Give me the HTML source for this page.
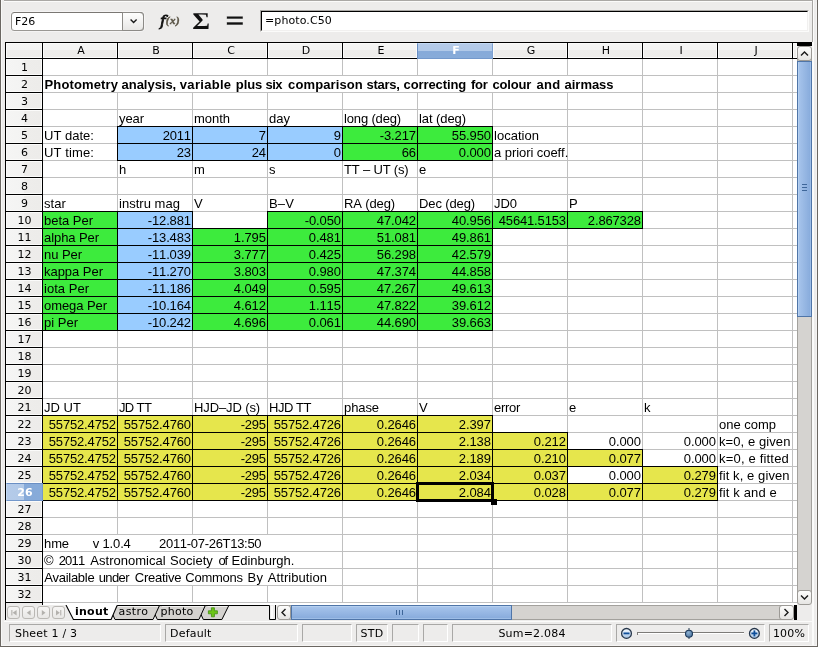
<!DOCTYPE html>
<html><head><meta charset="utf-8"><title>inout</title>
<style>
html,body{margin:0;padding:0}
body{width:818px;height:647px;position:relative;overflow:hidden;background:#edeceb;font-family:"DejaVu Sans","Liberation Sans",sans-serif;font-size:11px;color:#000}
div,span{position:absolute;box-sizing:border-box;white-space:nowrap}
.ui{font-family:"DejaVu Sans","Liberation Sans",sans-serif;font-size:11px;line-height:13px}
#sheet{left:43px;top:59px;width:754px;height:546px;background:#fff;overflow:hidden}
.vl{width:1px;background:#c0c0c0;top:0;height:544px}
.hl{height:1px;background:#c0c0c0;left:0;width:754px}
.wh{background:#fff;height:16px}
.c{width:76px;height:18px;border:1px solid #000}
.t{font-family:"Liberation Sans",sans-serif;font-size:13px;line-height:17px;height:17px;font-kerning:none}
.r{text-align:right}
.b{font-weight:bold}
.ch{top:43px;height:15px;width:74px;background:linear-gradient(#f5f5f4,#f3f3f2 50%,#eeedeb 50%,#edecea);border:1px solid #fbfbfa;text-align:center;line-height:13px;padding-left:2px}
.rh{left:6px;width:36px;height:16px;background:linear-gradient(90deg,#f5f5f4,#f3f3f2 50%,#eeedeb 50%,#edecea);border:1px solid #fbfbfa;text-align:center;line-height:14px;padding:1px 0 0 1px}
.sb{top:624px;height:18px;border:1px solid;border-color:#a9a8a6 #fff #fff #a9a8a6;line-height:16px;padding-top:1px;letter-spacing:0.2px}
</style></head><body><div id="w" style="left:0;top:0;width:818px;height:647px;will-change:transform">

<div style="left:0;top:0;width:1px;height:647px;background:#6b6762"></div>
<div style="left:1px;top:0;width:1px;height:646px;background:#f8f8f7"></div>
<div style="left:817px;top:0;width:1px;height:647px;background:#6b6762"></div>
<div style="left:812px;top:0;width:1px;height:42px;background:#a9a7a4"></div>
<div style="left:812px;top:42px;width:1px;height:604px;background:#fbfbfa"></div>
<div style="left:813px;top:0;width:1px;height:646px;background:#fbfbfa"></div>
<div style="left:1px;top:645px;width:816px;height:1px;background:#f6f5f4"></div>
<div style="left:816px;top:2px;width:1px;height:644px;background:#f4f3f2"></div>
<div style="left:0;top:646px;width:818px;height:1px;background:#6b6762"></div>
<div style="left:4px;top:0;width:808px;height:1px;background:#aaa8a5"></div>
<div style="left:4px;top:1px;width:808px;height:1px;background:#fbfbfa"></div>
<div style="left:11px;top:12px;width:133px;height:19px;border:1px solid;border-color:#7a7773 #8f8d89 #9a9894 #8f8d89;border-radius:3.5px;background:#fff;box-shadow:0 0 0 1px rgba(255,255,255,.45)"></div>
<div style="left:122px;top:12px;width:22px;height:19px;border:1px solid #8d8b87;border-radius:0 4px 4px 0;background:linear-gradient(#fefefe,#e8e7e5)"></div>
<svg style="position:absolute;left:129px;top:18px" width="9" height="7" viewBox="0 0 9 7"><path d="M1.6 1.6 L4.6 4.6 L7.6 1.6" fill="none" stroke="#1a1a1a" stroke-width="1.4"/></svg>
<div class="ui" style="left:15px;top:15px">F26</div>
<svg style="position:absolute;left:150px;top:5px" width="100" height="32" viewBox="0 0 100 32">
<text transform="translate(10,20.5) scale(1.05,1)" font-family="'DejaVu Serif','Liberation Serif',serif" font-style="italic" font-size="14.6" fill="#111" stroke="#111" stroke-width="0.8">f</text>
<text x="15.8" y="19" letter-spacing="0.5" font-family="'Liberation Serif','DejaVu Serif',serif" font-style="italic" font-weight="bold" font-size="11" fill="#5a5446" stroke="#5a5446" stroke-width="0.4">(x)</text>
<text transform="translate(42.2,23.9) scale(1.18,1.048) rotate(0.3)" font-family="'Liberation Serif','DejaVu Serif',serif" font-weight="bold" font-size="23" fill="#111">Σ</text>
<text transform="translate(74,24.2) scale(1,0.955)" font-family="'DejaVu Sans',sans-serif" font-weight="bold" font-size="26" fill="#111" stroke="#edeceb" stroke-width="0.4">=</text>
</svg>
<div style="left:260px;top:10px;width:549px;height:22px;border:1px solid;border-color:#a9a7a4 #fbfbfa #fbfbfa #a9a7a4"></div>
<div style="left:261px;top:11px;width:547px;height:20px;background:#fff;border:1px solid;border-color:#000 #f1f0ef #f1f0ef #000"></div>
<div class="ui" style="left:265px;top:14px;letter-spacing:0.1px">=photo.C50</div>
<div style="left:5px;top:42px;width:807px;height:1px;background:#000"></div>
<div style="left:797px;top:42px;width:15px;height:4px;background:#000"></div>
<div style="left:5px;top:42px;width:1px;height:578px;background:#000"></div>
<div style="left:42px;top:42px;width:1px;height:563px;background:#000"></div>
<div style="left:5px;top:58px;width:792px;height:1px;background:#000"></div>
<div style="left:6px;top:43px;width:36px;height:15px;background:linear-gradient(#f5f5f4,#f3f3f2 50%,#eeedeb 50%,#edecea);border:1px solid #fbfbfa"></div>
<div class="ch ui" style="left:43px">A</div>
<div style="left:117px;top:43px;width:1px;height:15px;background:#000"></div>
<div class="ch ui" style="left:118px">B</div>
<div style="left:192px;top:43px;width:1px;height:15px;background:#000"></div>
<div class="ch ui" style="left:193px">C</div>
<div style="left:267px;top:43px;width:1px;height:15px;background:#000"></div>
<div class="ch ui" style="left:268px">D</div>
<div style="left:342px;top:43px;width:1px;height:15px;background:#000"></div>
<div class="ch ui" style="left:343px">E</div>
<div style="left:417px;top:43px;width:1px;height:15px;background:#000"></div>
<div class="ch ui" style="left:417px;width:76px;height:16px;background:linear-gradient(#b5cbe9,#b1c9e8 50%,#86aad9 50%,#87abd9);border:1px solid;border-color:#c3daf5 #7da0d0 #7398cb #6a8fc4;color:#fff;font-weight:bold">F</div>
<div class="ch ui" style="left:493px">G</div>
<div style="left:567px;top:43px;width:1px;height:15px;background:#000"></div>
<div class="ch ui" style="left:568px">H</div>
<div style="left:642px;top:43px;width:1px;height:15px;background:#000"></div>
<div class="ch ui" style="left:643px">I</div>
<div style="left:717px;top:43px;width:1px;height:15px;background:#000"></div>
<div class="ch ui" style="left:718px">J</div>
<div style="left:792px;top:43px;width:1px;height:15px;background:#000"></div>
<div class="ch" style="left:793px;width:4px"></div>
<div class="rh ui" style="top:59px">1</div>
<div style="left:6px;top:75px;width:36px;height:1px;background:#000"></div>
<div class="rh ui" style="top:76px">2</div>
<div style="left:6px;top:92px;width:36px;height:1px;background:#000"></div>
<div class="rh ui" style="top:93px">3</div>
<div style="left:6px;top:109px;width:36px;height:1px;background:#000"></div>
<div class="rh ui" style="top:110px">4</div>
<div style="left:6px;top:126px;width:36px;height:1px;background:#000"></div>
<div class="rh ui" style="top:127px">5</div>
<div style="left:6px;top:143px;width:36px;height:1px;background:#000"></div>
<div class="rh ui" style="top:144px">6</div>
<div style="left:6px;top:160px;width:36px;height:1px;background:#000"></div>
<div class="rh ui" style="top:161px">7</div>
<div style="left:6px;top:177px;width:36px;height:1px;background:#000"></div>
<div class="rh ui" style="top:178px">8</div>
<div style="left:6px;top:194px;width:36px;height:1px;background:#000"></div>
<div class="rh ui" style="top:195px">9</div>
<div style="left:6px;top:211px;width:36px;height:1px;background:#000"></div>
<div class="rh ui" style="top:212px">10</div>
<div style="left:6px;top:228px;width:36px;height:1px;background:#000"></div>
<div class="rh ui" style="top:229px">11</div>
<div style="left:6px;top:245px;width:36px;height:1px;background:#000"></div>
<div class="rh ui" style="top:246px">12</div>
<div style="left:6px;top:262px;width:36px;height:1px;background:#000"></div>
<div class="rh ui" style="top:263px">13</div>
<div style="left:6px;top:279px;width:36px;height:1px;background:#000"></div>
<div class="rh ui" style="top:280px">14</div>
<div style="left:6px;top:296px;width:36px;height:1px;background:#000"></div>
<div class="rh ui" style="top:297px">15</div>
<div style="left:6px;top:313px;width:36px;height:1px;background:#000"></div>
<div class="rh ui" style="top:314px">16</div>
<div style="left:6px;top:330px;width:36px;height:1px;background:#000"></div>
<div class="rh ui" style="top:331px">17</div>
<div style="left:6px;top:347px;width:36px;height:1px;background:#000"></div>
<div class="rh ui" style="top:348px">18</div>
<div style="left:6px;top:364px;width:36px;height:1px;background:#000"></div>
<div class="rh ui" style="top:365px">19</div>
<div style="left:6px;top:381px;width:36px;height:1px;background:#000"></div>
<div class="rh ui" style="top:382px">20</div>
<div style="left:6px;top:398px;width:36px;height:1px;background:#000"></div>
<div class="rh ui" style="top:399px">21</div>
<div style="left:6px;top:415px;width:36px;height:1px;background:#000"></div>
<div class="rh ui" style="top:416px">22</div>
<div style="left:6px;top:432px;width:36px;height:1px;background:#000"></div>
<div class="rh ui" style="top:433px">23</div>
<div style="left:6px;top:449px;width:36px;height:1px;background:#000"></div>
<div class="rh ui" style="top:450px">24</div>
<div style="left:6px;top:466px;width:36px;height:1px;background:#000"></div>
<div class="rh ui" style="top:467px">25</div>
<div style="left:6px;top:483px;width:36px;height:1px;background:#000"></div>
<div class="rh ui" style="left:6px;width:37px;top:483px;height:18px;padding-top:2px;line-height:14px;background:linear-gradient(90deg,#b5cbe9,#b1c9e8 50%,#86aad9 50%,#87abd9);border:1px solid;border-color:#6a8fc4 #7398cb #7398cb #c3daf5;color:#fff;font-weight:bold">26</div>
<div class="rh ui" style="top:501px">27</div>
<div style="left:6px;top:517px;width:36px;height:1px;background:#000"></div>
<div class="rh ui" style="top:518px">28</div>
<div style="left:6px;top:534px;width:36px;height:1px;background:#000"></div>
<div class="rh ui" style="top:535px">29</div>
<div style="left:6px;top:551px;width:36px;height:1px;background:#000"></div>
<div class="rh ui" style="top:552px">30</div>
<div style="left:6px;top:568px;width:36px;height:1px;background:#000"></div>
<div class="rh ui" style="top:569px">31</div>
<div style="left:6px;top:585px;width:36px;height:1px;background:#000"></div>
<div class="rh ui" style="top:586px">32</div>
<div style="left:6px;top:602px;width:36px;height:1px;background:#000"></div>
<div id="sheet">
<div class="vl" style="left:74px"></div>
<div class="vl" style="left:149px"></div>
<div class="vl" style="left:224px"></div>
<div class="vl" style="left:299px"></div>
<div class="vl" style="left:374px"></div>
<div class="vl" style="left:449px"></div>
<div class="vl" style="left:524px"></div>
<div class="vl" style="left:599px"></div>
<div class="vl" style="left:674px"></div>
<div class="vl" style="left:749px"></div>
<div class="hl" style="top:16px"></div>
<div class="hl" style="top:33px"></div>
<div class="hl" style="top:50px"></div>
<div class="hl" style="top:67px"></div>
<div class="hl" style="top:84px"></div>
<div class="hl" style="top:101px"></div>
<div class="hl" style="top:118px"></div>
<div class="hl" style="top:135px"></div>
<div class="hl" style="top:152px"></div>
<div class="hl" style="top:169px"></div>
<div class="hl" style="top:186px"></div>
<div class="hl" style="top:203px"></div>
<div class="hl" style="top:220px"></div>
<div class="hl" style="top:237px"></div>
<div class="hl" style="top:254px"></div>
<div class="hl" style="top:271px"></div>
<div class="hl" style="top:288px"></div>
<div class="hl" style="top:305px"></div>
<div class="hl" style="top:322px"></div>
<div class="hl" style="top:339px"></div>
<div class="hl" style="top:356px"></div>
<div class="hl" style="top:373px"></div>
<div class="hl" style="top:390px"></div>
<div class="hl" style="top:407px"></div>
<div class="hl" style="top:424px"></div>
<div class="hl" style="top:441px"></div>
<div class="hl" style="top:458px"></div>
<div class="hl" style="top:475px"></div>
<div class="hl" style="top:492px"></div>
<div class="hl" style="top:509px"></div>
<div class="hl" style="top:526px"></div>
<div class="hl" style="top:543px"></div>
<div class="wh" style="left:74px;top:17px;width:1px"></div>
<div class="wh" style="left:149px;top:17px;width:1px"></div>
<div class="wh" style="left:224px;top:17px;width:1px"></div>
<div class="wh" style="left:299px;top:17px;width:1px"></div>
<div class="wh" style="left:374px;top:17px;width:1px"></div>
<div class="wh" style="left:449px;top:17px;width:1px"></div>
<div class="wh" style="left:524px;top:17px;width:1px"></div>
<div class="wh" style="left:74px;top:476px;width:1px"></div>
<div class="wh" style="left:149px;top:476px;width:1px"></div>
<div class="wh" style="left:224px;top:476px;width:1px"></div>
<div class="wh" style="left:74px;top:493px;width:1px"></div>
<div class="wh" style="left:149px;top:493px;width:1px"></div>
<div class="wh" style="left:224px;top:493px;width:1px"></div>
<div class="wh" style="left:74px;top:510px;width:1px"></div>
<div class="wh" style="left:149px;top:510px;width:1px"></div>
<div class="wh" style="left:224px;top:510px;width:1px"></div>
<div class="c" style="left:74px;top:67px;background:#99ccff"></div>
<div class="c" style="left:149px;top:67px;background:#99ccff"></div>
<div class="c" style="left:224px;top:67px;background:#99ccff"></div>
<div class="c" style="left:299px;top:67px;background:#3deb3d"></div>
<div class="c" style="left:374px;top:67px;background:#3deb3d"></div>
<div class="c" style="left:74px;top:84px;background:#99ccff"></div>
<div class="c" style="left:149px;top:84px;background:#99ccff"></div>
<div class="c" style="left:224px;top:84px;background:#99ccff"></div>
<div class="c" style="left:299px;top:84px;background:#3deb3d"></div>
<div class="c" style="left:374px;top:84px;background:#3deb3d"></div>
<div class="c" style="left:-1px;top:152px;background:#3deb3d"></div>
<div class="c" style="left:74px;top:152px;background:#99ccff"></div>
<div class="c" style="left:224px;top:152px;background:#3deb3d"></div>
<div class="c" style="left:299px;top:152px;background:#3deb3d"></div>
<div class="c" style="left:374px;top:152px;background:#3deb3d"></div>
<div class="c" style="left:449px;top:152px;background:#3deb3d"></div>
<div class="c" style="left:524px;top:152px;background:#3deb3d"></div>
<div class="c" style="left:-1px;top:169px;background:#3deb3d"></div>
<div class="c" style="left:74px;top:169px;background:#99ccff"></div>
<div class="c" style="left:149px;top:169px;background:#3deb3d"></div>
<div class="c" style="left:224px;top:169px;background:#3deb3d"></div>
<div class="c" style="left:299px;top:169px;background:#3deb3d"></div>
<div class="c" style="left:374px;top:169px;background:#3deb3d"></div>
<div class="c" style="left:-1px;top:186px;background:#3deb3d"></div>
<div class="c" style="left:74px;top:186px;background:#99ccff"></div>
<div class="c" style="left:149px;top:186px;background:#3deb3d"></div>
<div class="c" style="left:224px;top:186px;background:#3deb3d"></div>
<div class="c" style="left:299px;top:186px;background:#3deb3d"></div>
<div class="c" style="left:374px;top:186px;background:#3deb3d"></div>
<div class="c" style="left:-1px;top:203px;background:#3deb3d"></div>
<div class="c" style="left:74px;top:203px;background:#99ccff"></div>
<div class="c" style="left:149px;top:203px;background:#3deb3d"></div>
<div class="c" style="left:224px;top:203px;background:#3deb3d"></div>
<div class="c" style="left:299px;top:203px;background:#3deb3d"></div>
<div class="c" style="left:374px;top:203px;background:#3deb3d"></div>
<div class="c" style="left:-1px;top:220px;background:#3deb3d"></div>
<div class="c" style="left:74px;top:220px;background:#99ccff"></div>
<div class="c" style="left:149px;top:220px;background:#3deb3d"></div>
<div class="c" style="left:224px;top:220px;background:#3deb3d"></div>
<div class="c" style="left:299px;top:220px;background:#3deb3d"></div>
<div class="c" style="left:374px;top:220px;background:#3deb3d"></div>
<div class="c" style="left:-1px;top:237px;background:#3deb3d"></div>
<div class="c" style="left:74px;top:237px;background:#99ccff"></div>
<div class="c" style="left:149px;top:237px;background:#3deb3d"></div>
<div class="c" style="left:224px;top:237px;background:#3deb3d"></div>
<div class="c" style="left:299px;top:237px;background:#3deb3d"></div>
<div class="c" style="left:374px;top:237px;background:#3deb3d"></div>
<div class="c" style="left:-1px;top:254px;background:#3deb3d"></div>
<div class="c" style="left:74px;top:254px;background:#99ccff"></div>
<div class="c" style="left:149px;top:254px;background:#3deb3d"></div>
<div class="c" style="left:224px;top:254px;background:#3deb3d"></div>
<div class="c" style="left:299px;top:254px;background:#3deb3d"></div>
<div class="c" style="left:374px;top:254px;background:#3deb3d"></div>
<div class="c" style="left:-1px;top:356px;background:#e6e64c"></div>
<div class="c" style="left:74px;top:356px;background:#e6e64c"></div>
<div class="c" style="left:149px;top:356px;background:#e6e64c"></div>
<div class="c" style="left:224px;top:356px;background:#e6e64c"></div>
<div class="c" style="left:299px;top:356px;background:#e6e64c"></div>
<div class="c" style="left:374px;top:356px;background:#e6e64c"></div>
<div class="c" style="left:-1px;top:373px;background:#e6e64c"></div>
<div class="c" style="left:74px;top:373px;background:#e6e64c"></div>
<div class="c" style="left:149px;top:373px;background:#e6e64c"></div>
<div class="c" style="left:224px;top:373px;background:#e6e64c"></div>
<div class="c" style="left:299px;top:373px;background:#e6e64c"></div>
<div class="c" style="left:374px;top:373px;background:#e6e64c"></div>
<div class="c" style="left:449px;top:373px;background:#e6e64c"></div>
<div class="c" style="left:-1px;top:390px;background:#e6e64c"></div>
<div class="c" style="left:74px;top:390px;background:#e6e64c"></div>
<div class="c" style="left:149px;top:390px;background:#e6e64c"></div>
<div class="c" style="left:224px;top:390px;background:#e6e64c"></div>
<div class="c" style="left:299px;top:390px;background:#e6e64c"></div>
<div class="c" style="left:374px;top:390px;background:#e6e64c"></div>
<div class="c" style="left:449px;top:390px;background:#e6e64c"></div>
<div class="c" style="left:524px;top:390px;background:#e6e64c"></div>
<div class="c" style="left:-1px;top:407px;background:#e6e64c"></div>
<div class="c" style="left:74px;top:407px;background:#e6e64c"></div>
<div class="c" style="left:149px;top:407px;background:#e6e64c"></div>
<div class="c" style="left:224px;top:407px;background:#e6e64c"></div>
<div class="c" style="left:299px;top:407px;background:#e6e64c"></div>
<div class="c" style="left:374px;top:407px;background:#e6e64c"></div>
<div class="c" style="left:449px;top:407px;background:#e6e64c"></div>
<div class="c" style="left:599px;top:407px;background:#e6e64c"></div>
<div class="c" style="left:-1px;top:424px;background:#e6e64c"></div>
<div class="c" style="left:74px;top:424px;background:#e6e64c"></div>
<div class="c" style="left:149px;top:424px;background:#e6e64c"></div>
<div class="c" style="left:224px;top:424px;background:#e6e64c"></div>
<div class="c" style="left:299px;top:424px;background:#e6e64c"></div>
<div class="c" style="left:374px;top:424px;background:#e6e64c"></div>
<div class="c" style="left:449px;top:424px;background:#e6e64c"></div>
<div class="c" style="left:524px;top:424px;background:#e6e64c"></div>
<div class="c" style="left:599px;top:424px;background:#e6e64c"></div>
<div class="t" style="left:76px;top:51px;letter-spacing:-0.072px">year</div>
<div class="t" style="left:151px;top:51px;letter-spacing:-0.026px">month</div>
<div class="t" style="left:226px;top:51px;letter-spacing:0.013px">day</div>
<div class="t" style="left:301px;top:51px;letter-spacing:-0.154px">long (deg)</div>
<div class="t" style="left:376px;top:51px;letter-spacing:-0.077px">lat (deg)</div>
<div class="t" style="left:1px;top:68px;letter-spacing:0.018px">UT date:</div>
<div class="t r tb" style="left:75px;width:72.77px;top:68px;letter-spacing:-0.230px">2011</div>
<div class="t r tb" style="left:150px;width:72.77px;top:68px;letter-spacing:-0.230px">7</div>
<div class="t r tb" style="left:225px;width:72.77px;top:68px;letter-spacing:-0.230px">9</div>
<div class="t r tg" style="left:300px;width:72.86px;top:68px;letter-spacing:-0.143px">-3.217</div>
<div class="t r tg" style="left:375px;width:72.87px;top:68px;letter-spacing:-0.127px">55.950</div>
<div class="t" style="left:451px;top:68px;letter-spacing:0.024px">location</div>
<div class="t" style="left:1px;top:85px;letter-spacing:0.111px">UT time:</div>
<div class="t r tb" style="left:75px;width:72.77px;top:85px;letter-spacing:-0.230px">23</div>
<div class="t r tb" style="left:150px;width:72.77px;top:85px;letter-spacing:-0.230px">24</div>
<div class="t r tb" style="left:225px;width:72.77px;top:85px;letter-spacing:-0.230px">0</div>
<div class="t r tg" style="left:300px;width:72.77px;top:85px;letter-spacing:-0.230px">66</div>
<div class="t r tg" style="left:375px;width:72.89px;top:85px;letter-spacing:-0.106px">0.000</div>
<div class="t" style="left:451px;top:85px;letter-spacing:-0.063px">a priori coeff.</div>
<div class="t" style="left:76px;top:102px;letter-spacing:-0.230px">h</div>
<div class="t" style="left:151px;top:102px;letter-spacing:0.171px">m</div>
<div class="t" style="left:226px;top:102px;letter-spacing:0.500px">s</div>
<div class="t" style="left:301px;top:102px;letter-spacing:-0.176px">TT – UT (s)</div>
<div class="t" style="left:376px;top:102px;letter-spacing:-0.230px">e</div>
<div class="t" style="left:1px;top:136px;letter-spacing:0.082px">star</div>
<div class="t" style="left:76px;top:136px;letter-spacing:0.031px">instru mag</div>
<div class="t" style="left:151px;top:136px;letter-spacing:0.329px">V</div>
<div class="t" style="left:226px;top:136px;letter-spacing:0.143px">B–V</div>
<div class="t" style="left:301px;top:136px;letter-spacing:-0.127px">RA (deg)</div>
<div class="t" style="left:376px;top:136px;letter-spacing:-0.120px">Dec (deg)</div>
<div class="t" style="left:451px;top:136px;letter-spacing:-0.039px">JD0</div>
<div class="t" style="left:526px;top:136px;letter-spacing:0.329px">P</div>
<div class="t tg" style="left:1px;top:153px;letter-spacing:-0.018px">beta Per</div>
<div class="t r tb" style="left:75px;width:72.84px;top:153px;letter-spacing:-0.156px">-12.881</div>
<div class="t r tg" style="left:225px;width:72.86px;top:153px;letter-spacing:-0.143px">-0.050</div>
<div class="t r tg" style="left:300px;width:72.87px;top:153px;letter-spacing:-0.127px">47.042</div>
<div class="t r tg" style="left:375px;width:72.87px;top:153px;letter-spacing:-0.127px">40.956</div>
<div class="t r tg" style="left:450px;width:72.83px;top:153px;letter-spacing:-0.168px">45641.5153</div>
<div class="t r tg" style="left:525px;width:72.85px;top:153px;letter-spacing:-0.153px">2.867328</div>
<div class="t tg" style="left:1px;top:170px;letter-spacing:-0.072px">alpha Per</div>
<div class="t r tb" style="left:75px;width:72.84px;top:170px;letter-spacing:-0.156px">-13.483</div>
<div class="t r tg" style="left:150px;width:72.89px;top:170px;letter-spacing:-0.106px">1.795</div>
<div class="t r tg" style="left:225px;width:72.89px;top:170px;letter-spacing:-0.106px">0.481</div>
<div class="t r tg" style="left:300px;width:72.87px;top:170px;letter-spacing:-0.127px">51.081</div>
<div class="t r tg" style="left:375px;width:72.87px;top:170px;letter-spacing:-0.127px">49.861</div>
<div class="t tg" style="left:1px;top:187px;letter-spacing:-0.050px">nu Per</div>
<div class="t r tb" style="left:75px;width:72.84px;top:187px;letter-spacing:-0.156px">-11.039</div>
<div class="t r tg" style="left:150px;width:72.89px;top:187px;letter-spacing:-0.106px">3.777</div>
<div class="t r tg" style="left:225px;width:72.89px;top:187px;letter-spacing:-0.106px">0.425</div>
<div class="t r tg" style="left:300px;width:72.87px;top:187px;letter-spacing:-0.127px">56.298</div>
<div class="t r tg" style="left:375px;width:72.87px;top:187px;letter-spacing:-0.127px">42.579</div>
<div class="t tg" style="left:1px;top:204px;letter-spacing:-0.029px">kappa Per</div>
<div class="t r tb" style="left:75px;width:72.84px;top:204px;letter-spacing:-0.156px">-11.270</div>
<div class="t r tg" style="left:150px;width:72.89px;top:204px;letter-spacing:-0.106px">3.803</div>
<div class="t r tg" style="left:225px;width:72.89px;top:204px;letter-spacing:-0.106px">0.980</div>
<div class="t r tg" style="left:300px;width:72.87px;top:204px;letter-spacing:-0.127px">47.374</div>
<div class="t r tg" style="left:375px;width:72.87px;top:204px;letter-spacing:-0.127px">44.858</div>
<div class="t tg" style="left:1px;top:221px;letter-spacing:0.025px">iota Per</div>
<div class="t r tb" style="left:75px;width:72.84px;top:221px;letter-spacing:-0.156px">-11.186</div>
<div class="t r tg" style="left:150px;width:72.89px;top:221px;letter-spacing:-0.106px">4.049</div>
<div class="t r tg" style="left:225px;width:72.89px;top:221px;letter-spacing:-0.106px">0.595</div>
<div class="t r tg" style="left:300px;width:72.87px;top:221px;letter-spacing:-0.127px">47.267</div>
<div class="t r tg" style="left:375px;width:72.87px;top:221px;letter-spacing:-0.127px">49.613</div>
<div class="t tg" style="left:1px;top:238px;letter-spacing:-0.066px">omega Per</div>
<div class="t r tb" style="left:75px;width:72.84px;top:238px;letter-spacing:-0.156px">-10.164</div>
<div class="t r tg" style="left:150px;width:72.89px;top:238px;letter-spacing:-0.106px">4.612</div>
<div class="t r tg" style="left:225px;width:72.89px;top:238px;letter-spacing:-0.106px">1.115</div>
<div class="t r tg" style="left:300px;width:72.87px;top:238px;letter-spacing:-0.127px">47.822</div>
<div class="t r tg" style="left:375px;width:72.87px;top:238px;letter-spacing:-0.127px">39.612</div>
<div class="t tg" style="left:1px;top:255px;letter-spacing:0.007px">pi Per</div>
<div class="t r tb" style="left:75px;width:72.84px;top:255px;letter-spacing:-0.156px">-10.242</div>
<div class="t r tg" style="left:150px;width:72.89px;top:255px;letter-spacing:-0.106px">4.696</div>
<div class="t r tg" style="left:225px;width:72.89px;top:255px;letter-spacing:-0.106px">0.061</div>
<div class="t r tg" style="left:300px;width:72.87px;top:255px;letter-spacing:-0.127px">44.690</div>
<div class="t r tg" style="left:375px;width:72.87px;top:255px;letter-spacing:-0.127px">39.663</div>
<div class="t" style="left:1px;top:340px;letter-spacing:0.034px">JD UT</div>
<div class="t" style="left:76px;top:340px;letter-spacing:-0.636px">JD TT</div>
<div class="t" style="left:151px;top:340px;letter-spacing:-0.116px">HJD–JD (s)</div>
<div class="t" style="left:226px;top:340px;letter-spacing:-0.462px">HJD TT</div>
<div class="t" style="left:301px;top:340px;letter-spacing:-0.084px">phase</div>
<div class="t" style="left:376px;top:340px;letter-spacing:0.329px">V</div>
<div class="t" style="left:451px;top:340px;letter-spacing:-0.289px">error</div>
<div class="t" style="left:526px;top:340px;letter-spacing:-0.230px">e</div>
<div class="t" style="left:601px;top:340px;letter-spacing:0.500px">k</div>
<div class="t r ty" style="left:0px;width:72.83px;top:357px;letter-spacing:-0.168px">55752.4752</div>
<div class="t r ty" style="left:75px;width:72.83px;top:357px;letter-spacing:-0.168px">55752.4760</div>
<div class="t r ty" style="left:150px;width:72.75px;top:357px;letter-spacing:-0.255px">-295</div>
<div class="t r ty" style="left:225px;width:72.83px;top:357px;letter-spacing:-0.168px">55752.4726</div>
<div class="t r ty" style="left:300px;width:72.87px;top:357px;letter-spacing:-0.127px">0.2646</div>
<div class="t r ty" style="left:375px;width:72.89px;top:357px;letter-spacing:-0.106px">2.397</div>
<div class="t" style="left:676px;top:357px;letter-spacing:-0.011px">one comp</div>
<div class="t r ty" style="left:0px;width:72.83px;top:374px;letter-spacing:-0.168px">55752.4752</div>
<div class="t r ty" style="left:75px;width:72.83px;top:374px;letter-spacing:-0.168px">55752.4760</div>
<div class="t r ty" style="left:150px;width:72.75px;top:374px;letter-spacing:-0.255px">-295</div>
<div class="t r ty" style="left:225px;width:72.83px;top:374px;letter-spacing:-0.168px">55752.4726</div>
<div class="t r ty" style="left:300px;width:72.87px;top:374px;letter-spacing:-0.127px">0.2646</div>
<div class="t r ty" style="left:375px;width:72.89px;top:374px;letter-spacing:-0.106px">2.138</div>
<div class="t r ty" style="left:450px;width:72.89px;top:374px;letter-spacing:-0.106px">0.212</div>
<div class="t r" style="left:525px;width:72.89px;top:374px;letter-spacing:-0.106px">0.000</div>
<div class="t r" style="left:600px;width:72.89px;top:374px;letter-spacing:-0.106px">0.000</div>
<div class="t" style="left:676px;top:374px;letter-spacing:0.086px">k=0, e given</div>
<div class="t r ty" style="left:0px;width:72.83px;top:391px;letter-spacing:-0.168px">55752.4752</div>
<div class="t r ty" style="left:75px;width:72.83px;top:391px;letter-spacing:-0.168px">55752.4760</div>
<div class="t r ty" style="left:150px;width:72.75px;top:391px;letter-spacing:-0.255px">-295</div>
<div class="t r ty" style="left:225px;width:72.83px;top:391px;letter-spacing:-0.168px">55752.4726</div>
<div class="t r ty" style="left:300px;width:72.87px;top:391px;letter-spacing:-0.127px">0.2646</div>
<div class="t r ty" style="left:375px;width:72.89px;top:391px;letter-spacing:-0.106px">2.189</div>
<div class="t r ty" style="left:450px;width:72.89px;top:391px;letter-spacing:-0.106px">0.210</div>
<div class="t r ty" style="left:525px;width:72.89px;top:391px;letter-spacing:-0.106px">0.077</div>
<div class="t r" style="left:600px;width:72.89px;top:391px;letter-spacing:-0.106px">0.000</div>
<div class="t" style="left:676px;top:391px;letter-spacing:0.187px">k=0, e fitted</div>
<div class="t r ty" style="left:0px;width:72.83px;top:408px;letter-spacing:-0.168px">55752.4752</div>
<div class="t r ty" style="left:75px;width:72.83px;top:408px;letter-spacing:-0.168px">55752.4760</div>
<div class="t r ty" style="left:150px;width:72.75px;top:408px;letter-spacing:-0.255px">-295</div>
<div class="t r ty" style="left:225px;width:72.83px;top:408px;letter-spacing:-0.168px">55752.4726</div>
<div class="t r ty" style="left:300px;width:72.87px;top:408px;letter-spacing:-0.127px">0.2646</div>
<div class="t r ty" style="left:375px;width:72.89px;top:408px;letter-spacing:-0.106px">2.034</div>
<div class="t r ty" style="left:450px;width:72.89px;top:408px;letter-spacing:-0.106px">0.037</div>
<div class="t r" style="left:525px;width:72.89px;top:408px;letter-spacing:-0.106px">0.000</div>
<div class="t r ty" style="left:600px;width:72.89px;top:408px;letter-spacing:-0.106px">0.279</div>
<div class="t" style="left:676px;top:408px;letter-spacing:0.088px">fit k, e given</div>
<div class="t r ty" style="left:0px;width:72.83px;top:425px;letter-spacing:-0.168px">55752.4752</div>
<div class="t r ty" style="left:75px;width:72.83px;top:425px;letter-spacing:-0.168px">55752.4760</div>
<div class="t r ty" style="left:150px;width:72.75px;top:425px;letter-spacing:-0.255px">-295</div>
<div class="t r ty" style="left:225px;width:72.83px;top:425px;letter-spacing:-0.168px">55752.4726</div>
<div class="t r ty" style="left:300px;width:72.87px;top:425px;letter-spacing:-0.127px">0.2646</div>
<div class="t r ty" style="left:375px;width:72.89px;top:425px;letter-spacing:-0.106px">2.084</div>
<div class="t r ty" style="left:450px;width:72.89px;top:425px;letter-spacing:-0.106px">0.028</div>
<div class="t r ty" style="left:525px;width:72.89px;top:425px;letter-spacing:-0.106px">0.077</div>
<div class="t r ty" style="left:600px;width:72.89px;top:425px;letter-spacing:-0.106px">0.279</div>
<div class="t" style="left:676px;top:425px;letter-spacing:0.148px">fit k and e</div>
<div class="t" style="left:1px;top:476px;letter-spacing:-0.096px">hme</div>
<div class="t" style="left:49.7px;top:476px;letter-spacing:-0.146px">v 1.0.4</div>
<div class="t" style="left:116px;top:476px;letter-spacing:-0.292px">2011-07-26T13:50</div>
<div class="t b" style="left:1.53px;top:17px;letter-spacing:0.127px">Photometry</div>
<div class="t b" style="left:78.52px;top:17px;letter-spacing:-0.026px">analysis,</div>
<div class="t b" style="left:136.85px;top:17px;letter-spacing:0.293px">variable</div>
<div class="t b" style="left:192.84px;top:17px;letter-spacing:-0.111px">plus</div>
<div class="t b" style="left:222.54px;top:17px;letter-spacing:-0.510px">six</div>
<div class="t b" style="left:245.09px;top:17px;letter-spacing:0.117px">comparison</div>
<div class="t b" style="left:323.44px;top:17px;letter-spacing:-0.231px">stars,</div>
<div class="t b" style="left:360.59px;top:17px;letter-spacing:-0.110px">correcting</div>
<div class="t b" style="left:427.88px;top:17px;letter-spacing:-0.155px">for</div>
<div class="t b" style="left:449.59px;top:17px;letter-spacing:-0.204px">colour</div>
<div class="t b" style="left:493.62px;top:17px;letter-spacing:0.263px">and</div>
<div class="t b" style="left:521.62px;top:17px;letter-spacing:-0.039px">airmass</div>
<div class="t" style="left:1.00px;top:493px;letter-spacing:1.621px">©</div>
<div class="t" style="left:15.65px;top:493px;letter-spacing:-0.777px">2011</div>
<div class="t" style="left:47.37px;top:493px;letter-spacing:0.005px">Astronomical</div>
<div class="t" style="left:127.01px;top:493px;letter-spacing:0.031px">Society</div>
<div class="t" style="left:175.45px;top:493px;letter-spacing:-1.115px">of</div>
<div class="t" style="left:188.53px;top:493px;letter-spacing:-0.014px">Edinburgh.</div>
<div class="t" style="left:1.17px;top:510px;letter-spacing:-0.282px">Available</div>
<div class="t" style="left:55.76px;top:510px;letter-spacing:-0.622px">under</div>
<div class="t" style="left:91.74px;top:510px;letter-spacing:-0.238px">Creative</div>
<div class="t" style="left:142.34px;top:510px;letter-spacing:-0.268px">Commons</div>
<div class="t" style="left:204.43px;top:510px;letter-spacing:0.421px">By</div>
<div class="t" style="left:224.77px;top:510px;letter-spacing:0.074px">Attribution</div>
<div style="left:373px;top:423px;width:78px;height:20px;border:3px solid #000"></div>
<div style="left:448px;top:440px;width:6px;height:6px;background:#000"></div>
</div>
<div style="left:797px;top:58px;width:15px;height:535px;background:#d5d3d0;border-left:1px solid #a3a19d;border-right:1px solid #a3a19d"></div>
<div style="left:797px;top:61px;width:15px;height:256px;background:linear-gradient(90deg,#a8c5ec,#86aadb);border:1px solid #4f75a8;box-shadow:inset 1px 0 0 #b5d0f0,inset -1px 0 0 #9dbde6"></div>
<div style="left:797px;top:46px;width:15px;height:15px;background:linear-gradient(#fdfdfc,#e6e5e3);border:1px solid #9c9a96;border-radius:3px"></div>
<svg style="position:absolute;left:800px;top:50px" width="9" height="7" viewBox="0 0 9 7"><path d="M1 5.5 L4.5 2 L8 5.5" fill="none" stroke="#1a1a1a" stroke-width="1.4"/></svg>
<div style="left:797px;top:590px;width:15px;height:15px;background:linear-gradient(#fdfdfc,#e6e5e3);border:1px solid #9c9a96;border-radius:3px"></div>
<svg style="position:absolute;left:800px;top:594px" width="9" height="7" viewBox="0 0 9 7"><path d="M1 1.5 L4.5 5 L8 1.5" fill="none" stroke="#1a1a1a" stroke-width="1.4"/></svg>
<div style="left:802px;top:184px;width:5px;height:1px;background:#3e6699"></div>
<div style="left:802px;top:187px;width:5px;height:1px;background:#3e6699"></div>
<div style="left:802px;top:190px;width:5px;height:1px;background:#3e6699"></div>
<div style="left:6px;top:605px;width:791px;height:15px;background:#edeceb"></div>
<div style="left:7px;top:606px;width:13px;height:13px;background:linear-gradient(#f7f6f5,#e8e7e5);border:1px solid #bab8b4;border-radius:3px"></div>
<div style="left:22px;top:606px;width:13px;height:13px;background:linear-gradient(#f7f6f5,#e8e7e5);border:1px solid #bab8b4;border-radius:3px"></div>
<div style="left:37px;top:606px;width:13px;height:13px;background:linear-gradient(#f7f6f5,#e8e7e5);border:1px solid #bab8b4;border-radius:3px"></div>
<div style="left:52px;top:606px;width:13px;height:13px;background:linear-gradient(#f7f6f5,#e8e7e5);border:1px solid #bab8b4;border-radius:3px"></div>
<svg style="position:absolute;left:6px;top:605px" width="272" height="16" viewBox="0 0 272 16">
<g fill="#b3b1ad"><rect x="5.3" y="5" width="1.1" height="5.4"/><path d="M10.6 5 L10.6 10.4 L6.6 7.7Z"/>
<path d="M24.6 5 L24.6 10.4 L20.8 7.7Z"/><path d="M35.8 5 L35.8 10.4 L39.5 7.7Z"/>
<path d="M50 5 L50 10.4 L53.8 7.7Z"/><rect x="54.2" y="5" width="1.1" height="5.4"/></g>
<g stroke="#000" stroke-width="1" fill="#d4d2cf">
<path d="M190.9 0.5 L197.3 14.5 L215.9 14.5 L222.8 0.5Z"/>
<path d="M144.9 0.5 L151.3 14.5 L192.9 14.5 L199.3 0.5Z"/>
<path d="M102.6 0.5 L109 14.5 L147 14.5 L153.5 0.5Z"/>
</g>
<path d="M112 1.5 L152 1.5 M156 1.5 L198 1.5 M201.5 1.5 L221.5 1.5" stroke="#f1f0ee" stroke-width="1" fill="none"/>
<path d="M59.8 0 L67.4 14.5 L105.1 14.5 L111.3 0Z" fill="#fff" stroke="none"/>
<path d="M60 0 L67.4 14.5 L105.1 14.5 L111.1 0.5" fill="none" stroke="#000" stroke-width="1.1"/>
<path d="M222.3 0.5 L263.5 0.5 L263.5 14.5 L269.5 14.5 L269.5 0" fill="none" stroke="#000" stroke-width="1"/>
<rect x="265" y="1" width="2" height="13" fill="#fbfbfa"/>
<path d="M202.4 5.8h3v-3h3v3h3v3h-3v3h-3v-3h-3z" fill="#6cc417" stroke="#3f8f0c" stroke-width="0.8"/>
</svg>
<div style="left:4px;top:621px;width:808px;height:1px;background:#fbfbfa"></div>
<div class="ui b" style="left:75px;top:605px;letter-spacing:0.25px">inout</div>
<div class="ui" style="left:118.5px;top:605px;letter-spacing:0.4px">astro</div>
<div class="ui" style="left:160.4px;top:605px;letter-spacing:0.3px">photo</div>
<div style="left:289px;top:605px;width:493px;height:15px;background:#d5d3d0;border-top:1px solid #a3a19d;border-bottom:1px solid #a3a19d"></div>
<div style="left:291px;top:605px;width:221px;height:15px;background:linear-gradient(#a8c5ec,#86aadb);border:1px solid #4f75a8;box-shadow:inset 0 1px 0 #b5d0f0,inset 0 -1px 0 #9dbde6"></div>
<div style="left:396px;top:610px;width:1px;height:5px;background:#3e6699"></div>
<div style="left:399px;top:610px;width:1px;height:5px;background:#3e6699"></div>
<div style="left:402px;top:610px;width:1px;height:5px;background:#3e6699"></div>
<div style="left:277px;top:605px;width:14px;height:15px;background:linear-gradient(#fdfdfc,#e6e5e3);border:1px solid #9c9a96;border-radius:3px"></div>
<svg style="position:absolute;left:280px;top:608px" width="7" height="9" viewBox="0 0 7 9"><path d="M5.5 1 L2 4.5 L5.5 8" fill="none" stroke="#1a1a1a" stroke-width="1.4"/></svg>
<div style="left:779px;top:605px;width:15px;height:15px;background:linear-gradient(#fdfdfc,#e6e5e3);border:1px solid #9c9a96;border-radius:3px"></div>
<svg style="position:absolute;left:783px;top:608px" width="7" height="9" viewBox="0 0 7 9"><path d="M1.5 1 L5 4.5 L1.5 8" fill="none" stroke="#1a1a1a" stroke-width="1.4"/></svg>
<div style="left:794px;top:605px;width:3px;height:15px;background:#000"></div>
<div class="sb ui" style="left:9px;width:152px;padding-left:5px;">Sheet 1 / 3</div>
<div class="sb ui" style="left:165px;width:133px;padding-left:4px;">Default</div>
<div class="sb ui" style="left:302px;width:50px;padding-left:5px;"></div>
<div class="sb ui" style="left:356px;width:32px;text-align:center;">STD</div>
<div class="sb ui" style="left:392px;width:27px;padding-left:5px;"></div>
<div class="sb ui" style="left:423px;width:25px;padding-left:5px;"></div>
<div class="sb ui" style="left:452px;width:160px;text-align:center;">Sum=2.084</div>
<div class="sb ui" style="left:616px;width:149px;padding-left:5px;"></div>
<div class="sb ui" style="left:769px;width:40px;text-align:center;">100%</div>
<svg style="position:absolute;left:617px;top:625px" width="147" height="16" viewBox="0 0 147 16">
<defs><linearGradient id="g1" x1="0" y1="0" x2="0" y2="1"><stop offset="0" stop-color="#fbfdff"/><stop offset="1" stop-color="#a4c3e5"/></linearGradient>
<radialGradient id="g2" cx="0.4" cy="0.35" r="0.7"><stop offset="0" stop-color="#8fb2d3"/><stop offset="1" stop-color="#4b739d"/></radialGradient></defs>
<rect x="20" y="7" width="107" height="1" fill="#7d7b78"/><rect x="20" y="8" width="107" height="1" fill="#fff"/><rect x="20" y="7" width="1" height="3" fill="#7d7b78"/>
<circle cx="9.5" cy="8.4" r="4.9" fill="url(#g1)" stroke="#26364a" stroke-width="1.3"/><rect x="6.5" y="7.5" width="6" height="1.8" fill="#0f4f9a"/>
<circle cx="137.4" cy="8.4" r="4.9" fill="url(#g1)" stroke="#26364a" stroke-width="1.3"/><rect x="134.4" y="7.5" width="6" height="1.8" fill="#0f4f9a"/><rect x="136.5" y="5.4" width="1.8" height="6" fill="#0f4f9a"/>
<rect x="71.5" y="3" width="1" height="11" fill="#2a3f55"/>
<circle cx="72" cy="8.7" r="3.5" fill="url(#g2)" stroke="#1f3b5c" stroke-width="1.1"/>
</svg>
</div></body></html>
